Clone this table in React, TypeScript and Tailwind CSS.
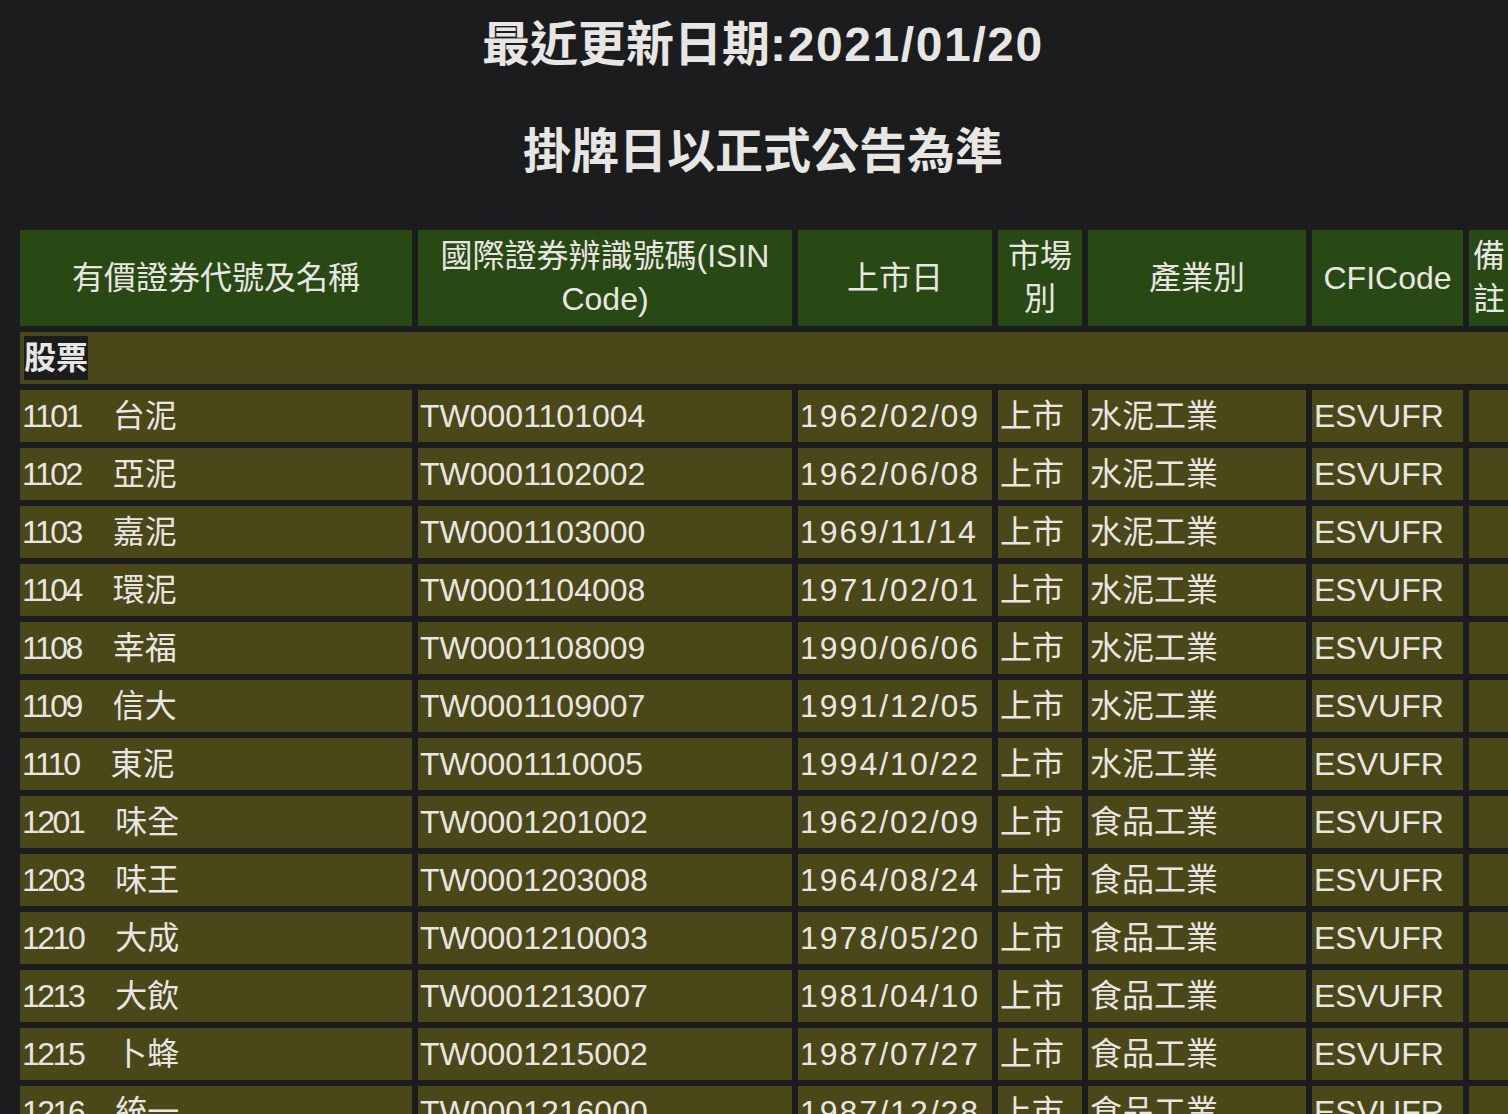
import React from "react";

const rows: [string, string, string, string, string, string][] = [
  ["1101　台泥", "TW0001101004", "1962/02/09", "上市", "水泥工業", "ESVUFR"],
  ["1102　亞泥", "TW0001102002", "1962/06/08", "上市", "水泥工業", "ESVUFR"],
  ["1103　嘉泥", "TW0001103000", "1969/11/14", "上市", "水泥工業", "ESVUFR"],
  ["1104　環泥", "TW0001104008", "1971/02/01", "上市", "水泥工業", "ESVUFR"],
  ["1108　幸福", "TW0001108009", "1990/06/06", "上市", "水泥工業", "ESVUFR"],
  ["1109　信大", "TW0001109007", "1991/12/05", "上市", "水泥工業", "ESVUFR"],
  ["1110　東泥", "TW0001110005", "1994/10/22", "上市", "水泥工業", "ESVUFR"],
  ["1201　味全", "TW0001201002", "1962/02/09", "上市", "食品工業", "ESVUFR"],
  ["1203　味王", "TW0001203008", "1964/08/24", "上市", "食品工業", "ESVUFR"],
  ["1210　大成", "TW0001210003", "1978/05/20", "上市", "食品工業", "ESVUFR"],
  ["1213　大飲", "TW0001213007", "1981/04/10", "上市", "食品工業", "ESVUFR"],
  ["1215　卜蜂", "TW0001215002", "1987/07/27", "上市", "食品工業", "ESVUFR"],
  ["1216　統一", "TW0001216000", "1987/12/28", "上市", "食品工業", "ESVUFR"],
];

const headers = [
  "有價證券代號及名稱",
  "國際證券辨識號碼(ISIN Code)",
  "上市日",
  "市場別",
  "產業別",
  "CFICode",
  "備註",
];

const cell = "h-[52px] bg-[#4a4818] px-[2px] align-middle whitespace-nowrap leading-[52px]";

export default function App() {
  return (
    <div className="w-[1508px] h-[1114px] overflow-hidden bg-[#1b1c1e] text-[#e8e6e3] font-['Liberation_Sans','Noto_Sans_CJK_TC',sans-serif]">
      <div className="w-[1526px]">
        <div className="flex flex-col items-center pt-[17px]">
          <h1 className="text-[48px] font-bold leading-[56px]">
            最近更新日期<span className="tracking-[1.6px]">:2021/01/20</span>
          </h1>
          <h2 className="mt-[51px] text-[48px] font-bold leading-[56px]">掛牌日以正式公告為準</h2>
        </div>
        <div className="mt-[44px] ml-[14px]">
          <table className="table-fixed border-separate border-spacing-[6px] w-[1501px] text-[32px]">
            <colgroup>
              <col className="w-[392px]" />
              <col className="w-[374px]" />
              <col className="w-[194px]" />
              <col className="w-[84px]" />
              <col className="w-[218px]" />
              <col className="w-[151px]" />
              <col className="w-[40px]" />
            </colgroup>
            <thead>
              <tr>
                {headers.map((h) => (
                  <th
                    key={h}
                    className="h-[96px] bg-[#284914] px-[2px] text-center align-middle font-normal leading-[43px]"
                  >
                    {h}
                  </th>
                ))}
              </tr>
            </thead>
            <tbody>
              <tr>
                <td colSpan={7} className="h-[52px] bg-[#4a4818] px-[4px] align-middle">
                  <span className="inline-block bg-[#1b1c1e] font-bold leading-[44px]">股票</span>
                </td>
              </tr>
              {rows.map((r) => {
                const [code, name] = r[0].split("　");
                return (
                  <tr key={r[1]}>
                    <td className={cell}>
                      <span className="tracking-[-2.5px]">{code}</span>
                      {"　"}
                      {name}
                    </td>
                    <td className={cell}>{r[1]}</td>
                    <td className={cell + " tracking-[2px]"}>{r[2]}</td>
                    <td className={cell}>{r[3]}</td>
                    <td className={cell}>{r[4]}</td>
                    <td className={cell}>{r[5]}</td>
                    <td className="h-[52px] bg-[#4a4818]"></td>
                  </tr>
                );
              })}
            </tbody>
          </table>
        </div>
      </div>
    </div>
  );
}
